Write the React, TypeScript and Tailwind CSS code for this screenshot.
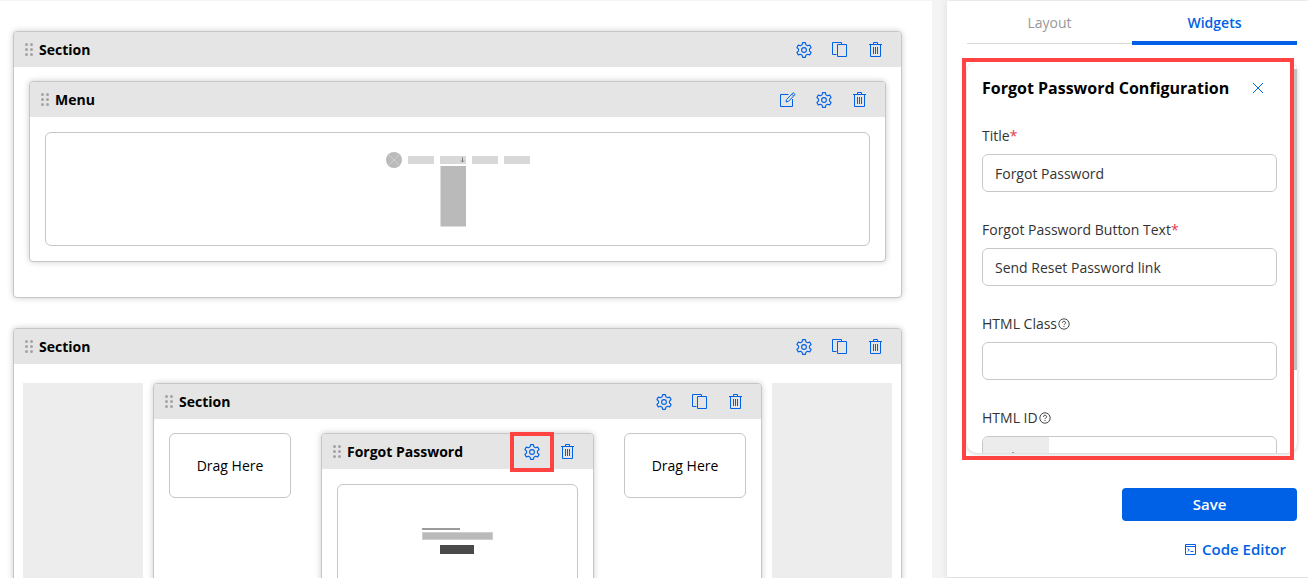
import { useState } from 'react';
import type { ReactNode } from 'react';

type ActionName = 'edit' | 'settings' | 'copy' | 'delete';

const ACTION_LABELS: Record<ActionName, string> = {
  edit: 'Edit',
  settings: 'Settings',
  copy: 'Duplicate',
  delete: 'Delete',
};

const ActionIcon = ({ name }: { name: ActionName }) => (
  <svg
    viewBox="0 0 16 16"
    className="size-4"
    fill="none"
    stroke="currentColor"
    strokeLinejoin="round"
    aria-hidden="true"
  >
    {name === 'settings' && (
      <g strokeWidth="1.1">
        <path d="M6.1 2.8 6.6.6H9.4L9.9 2.8 11.55 3.75 13.7 3.1 15.1 5.5 13.45 7.05V8.95L15.1 10.5 13.7 12.9 11.55 12.25 9.9 13.2 9.4 15.4H6.6L6.1 13.2 4.45 12.25 2.3 12.9.9 10.5 2.55 8.95V7.05L.9 5.5 2.3 3.1 4.45 3.75Z" />
        <circle cx="8" cy="8" r="2.4" />
      </g>
    )}
    {name === 'copy' && (
      <path strokeLinejoin="miter" d="M9.5 2.5V.5H.5v12h4M5.5 2.5h9v12h-9z" />
    )}
    {name === 'delete' && (
      <path
        strokeLinejoin="miter"
        d="M1 2.500h13M5.500 2.500v-2h4v2M2.500 2.500v12h10v-12M5.500 5v7M7.500 5v7M9.500 5v7"
      />
    )}
    {name === 'edit' && (
      <>
        <path strokeLinejoin="miter" d="M8.500 2.500H.5v12h12V7" />
        <path d="M6 10l.6-2.600L13.200.700l1.900 1.800L8.500 9.300zM11.800 2.200l1.800 1.800" />
      </>
    )}
  </svg>
);

const GripDots = () => (
  <svg viewBox="0 0 8 13" className="h-[13px] w-2 fill-[#a3a3a3]" aria-hidden="true">
    {[1.5, 6.5, 11.5].map((y) => (
      <g key={y}>
        <circle cx="1.5" cy={y} r="1.5" />
        <circle cx="6.5" cy={y} r="1.5" />
      </g>
    ))}
  </svg>
);

type BlockProps = {
  title: string;
  actions: ActionName[];
  highlight?: ActionName;
  className?: string;
  children: ReactNode;
};

const Block = ({ title, actions, highlight, className = '', children }: BlockProps) => (
  <section
    className={`rounded border border-[#c6c6c6] bg-white shadow-[0_0_6px_rgba(0,0,0,0.2)] ${className}`}
  >
    <header className="flex h-[35px] items-center rounded-t-[3px] bg-[#e5e5e5] pr-[15px] pl-[11px]">
      <GripDots />
      <h2 className="ml-1.5 text-sm font-bold whitespace-nowrap">{title}</h2>
      <div className="ml-auto flex gap-4">
        {actions.map((name) => (
          <button
            key={name}
            type="button"
            aria-label={`${ACTION_LABELS[name]} ${title}`}
            className="relative flex size-5 items-center justify-center text-[#0061e6]"
          >
            <ActionIcon name={name} />
            {name === highlight && (
              <span className="absolute -inset-x-3 -inset-y-2.5 border-4 border-[#ff4242]" />
            )}
          </button>
        ))}
      </div>
    </header>
    {children}
  </section>
);

const Preview = ({ children }: { children: ReactNode }) => (
  <div className="m-[15px] flex h-[114px] items-center justify-center rounded-md border border-[#c6c6c6]">
    {children}
  </div>
);

const MenuPreview = () => (
  <svg viewBox="0 0 144 75" className="h-[75px] w-36" aria-hidden="true">
    <circle cx="8" cy="8" r="8" fill="#bababa" />
    <path d="M3 3l10 10M13 3L3 13" stroke="#d0d0d0" fill="none" />
    <g fill="#d8d8d8">
      <rect x="22" y="4" width="26" height="8" />
      <rect x="54" y="4" width="26" height="8" />
      <rect x="86" y="4" width="26" height="8" />
      <rect x="118" y="4" width="26" height="8" />
    </g>
    <path d="M76.500 5.500v4.500M75 8.500l1.500 1.500L78 8.500" stroke="#666" strokeWidth=".8" fill="none" />
    <rect x="54.500" y="14" width="25.500" height="60.500" fill="#bababa" />
  </svg>
);

const FormPreview = () => (
  <svg viewBox="0 0 71 28" className="h-7 w-[71px]" aria-hidden="true">
    <rect y="1" width="38" height="2" fill="#9b9b9b" />
    <rect x=".5" y="5.500" width="70" height="7" fill="#bababa" stroke="#cfcfcf" />
    <rect x="18" y="18" width="34" height="9" fill="#4a4a4a" />
  </svg>
);

const DropZone = () => (
  <div className="flex h-[65px] w-[122px] shrink-0 items-center justify-center rounded-md border border-[#c6c6c6] text-sm">
    Drag Here
  </div>
);

const HelpIcon = () => (
  <svg
    viewBox="0 0 12 12"
    className="ml-px size-3"
    fill="none"
    stroke="currentColor"
    strokeWidth=".9"
    aria-hidden="true"
  >
    <circle cx="6" cy="6" r="5.200" />
    <path d="M4.400 4.800a1.600 1.500 0 1 1 2.300 1.300q-.7.400-.7 1M6 8v1" />
  </svg>
);

type FieldProps = {
  id: string;
  label: string;
  initial?: string;
  required?: boolean;
  help?: boolean;
  prefix?: string;
};

const Field = ({ id, label, initial = '', required, help, prefix }: FieldProps) => {
  const [value, setValue] = useState(initial);

  return (
    <div className="mb-7">
      <label htmlFor={id} className="mb-2 flex h-5 items-center text-sm text-[#333]">
        {label}
        {required && <span className="text-[#e8384f]">*</span>}
        {help && <HelpIcon />}
      </label>
      <div className="flex h-[38px] overflow-hidden rounded-md border border-[#c8c8c8]">
        {prefix && (
          <span className="flex w-[66px] shrink-0 items-center bg-[#ececec] pt-1 pl-3 text-sm text-[#555]">
            {prefix}
          </span>
        )}
        <input
          id={id}
          type="text"
          value={value}
          onChange={(e) => setValue(e.target.value)}
          className="w-full min-w-0 px-3 pt-0.5 text-sm text-[#333] outline-none"
        />
      </div>
    </div>
  );
};

const Sidebar = () => (
  <aside className="flex w-[361px] shrink-0 flex-col border-b border-[#e2e2e2] bg-white pr-[11px] pl-5 shadow-[0_0_8px_rgba(0,0,0,0.1)]">
    <nav className="flex h-11 text-sm">
      <button type="button" className="mb-px flex-1 border-b border-[#d9d9d9] pt-px text-[#999]">
        Layout
      </button>
      <button
        type="button"
        className="flex-1 border-b-4 border-[#0061e6] pt-1 font-semibold text-[#0061e6]"
      >
        Widgets
      </button>
    </nav>

    <div className="relative mt-[17px] min-h-0 flex-1">
      <form className="h-full overflow-hidden rounded-[10px] px-[15px] pr-5 shadow-[0_1px_4px_rgba(0,0,0,0.2)]">
        <div className="flex h-[52px] items-center justify-between pr-3">
          <h2 className="text-base font-bold whitespace-nowrap">Forgot Password Configuration</h2>
          <button type="button" aria-label="Close" className="p-0.5 text-[#0061e6]">
            <svg viewBox="0 0 10 10" className="size-2.5" stroke="currentColor" aria-hidden="true">
              <path d="M0 0l10 10M10 0L0 10" />
            </svg>
          </button>
        </div>
        <div className="pt-3">
          <Field id="title" label="Title" initial="Forgot Password" required />
          <Field
            id="button-text"
            label="Forgot Password Button Text"
            initial="Send Reset Password link"
            required
          />
          <Field id="html-class" label="HTML Class" help />
          <Field id="html-id" label="HTML ID" help prefix="api_" />
        </div>
      </form>
      <div className="absolute top-[7px] right-0 h-[301px] w-1.5 bg-[#c1c1c1]" />
      <div className="pointer-events-none absolute -top-1 right-[3px] -bottom-[7px] -left-[5px] border-4 border-[#ff4242]" />
    </div>

    <footer className="flex flex-col items-end pt-[35px] pb-4">
      <button
        type="button"
        className="h-[33px] w-[175px] rounded bg-[#0061e6] text-[15px] font-semibold text-white"
      >
        Save
      </button>
      <a
        href="#code-editor"
        className="mt-4 mr-[11px] flex h-6 items-center gap-1.5 text-[15px] font-semibold text-[#0061e6]"
      >
        <svg
          viewBox="0 0 11 11"
          className="size-[11px]"
          fill="none"
          stroke="currentColor"
          aria-hidden="true"
        >
          <path d="M.5.5h10v10H.5zM.5 2.500h10" />
          <path d="M2.700 4.500l1.700 1.500-1.700 1.500M5.500 7.500h3" />
        </svg>
        Code Editor
      </a>
    </footer>
  </aside>
);

export default function App() {
  return (
    <div className="flex h-screen overflow-hidden bg-[#f4f4f4] pt-px font-['Open_Sans',sans-serif] text-black">
      <main className="mr-[15px] min-w-0 flex-1 overflow-hidden bg-white pt-[30px] pr-[30px] pl-[13px]">
        <Block title="Section" actions={['settings', 'copy', 'delete']}>
          <div className="px-[15px] pt-3.5 pb-[35px]">
            <Block title="Menu" actions={['edit', 'settings', 'delete']}>
              <Preview>
                <MenuPreview />
              </Preview>
            </Block>
          </div>
        </Block>

        <Block title="Section" actions={['settings', 'copy', 'delete']} className="mt-[30px]">
          <div className="flex gap-2.5 px-[9px] pt-[19px] pb-5">
            <div className="w-[120px] shrink-0 bg-[#ededed]" />
            <Block
              title="Section"
              actions={['settings', 'copy', 'delete']}
              className="min-w-0 flex-1"
            >
              <div className="flex items-start gap-[30px] px-[15px] pt-3.5 pb-[35px]">
                <DropZone />
                <Block
                  title="Forgot Password"
                  actions={['settings', 'delete']}
                  highlight="settings"
                  className="min-w-0 flex-1"
                >
                  <Preview>
                    <FormPreview />
                  </Preview>
                </Block>
                <DropZone />
              </div>
            </Block>
            <div className="w-[120px] shrink-0 bg-[#ededed]" />
          </div>
        </Block>
      </main>
      <Sidebar />
    </div>
  );
}
